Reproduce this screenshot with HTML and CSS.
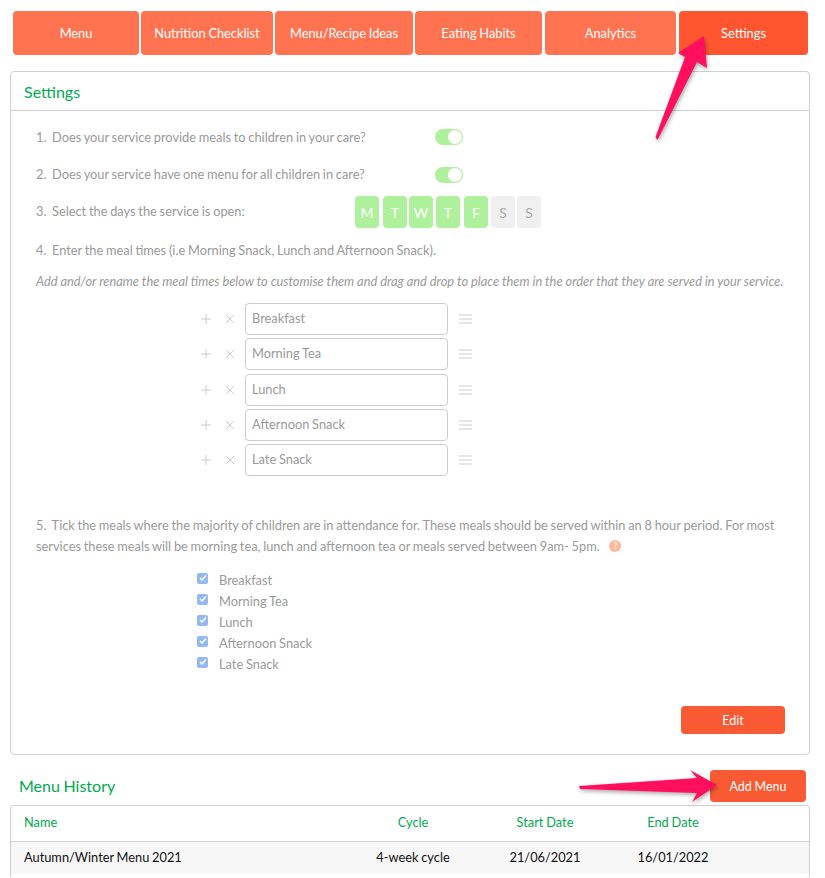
FILE: index.html
```html
<!DOCTYPE html>
<html lang="en">
<head>
  <meta charset="UTF-8" />
  <title>Settings</title>
  <link rel="stylesheet" href="styles.css">
</head>
<body>
  <nav class="tabs">
    <a class="tab tab-menu">Menu</a>
    <a class="tab tab-nutrition">Nutrition Checklist</a>
    <a class="tab tab-ideas">Menu/Recipe Ideas</a>
    <a class="tab tab-habits">Eating Habits</a>
    <a class="tab tab-analytics">Analytics</a>
    <a class="tab tab-settings active">Settings</a>
  </nav>

  <section class="panel">
    <h2 class="panel-title">Settings</h2>
    <div class="panel-body">
      <div class="question">
        <span class="question-text">1.&nbsp; Does your service provide meals to children in your care?</span>
        <span class="toggle"><span class="knob"></span></span>
      </div>
      <div class="question">
        <span class="question-text">2.&nbsp; Does your service have one menu for all children in care?</span>
        <span class="toggle toggle-second"><span class="knob"></span></span>
      </div>
      <div class="question">
        <span class="question-text">3.&nbsp; Select the days the service is open:</span>
        <div class="days">
          <span class="day on">M</span>
          <span class="day on">T</span>
          <span class="day on">W</span>
          <span class="day on">T</span>
          <span class="day on">F</span>
          <span class="day">S</span>
          <span class="day">S</span>
        </div>
      </div>

      <p class="line line-four">4.&nbsp; Enter the meal times (i.e Morning Snack, Lunch and Afternoon Snack).</p>
      <p class="line line-hint">Add and/or rename the meal times below to customise them and drag and drop to place them in the order that they are served in your service.</p>

      <div class="meals">
        <div class="meal">
          <svg class="icon" width="12" height="12" viewBox="0 0 12 12"><path d="M6 1v10M1 6h10"/></svg>
          <svg class="icon" width="12" height="12" viewBox="0 0 12 12"><path d="M2 2l8 8M10 2l-8 8"/></svg>
          <input class="meal-input" value="Breakfast" readonly>
          <svg class="icon" width="13" height="12" viewBox="0 0 13 12"><path d="M0 2h13M0 6h13M0 10h13"/></svg>
        </div>
        <div class="meal">
          <svg class="icon" width="12" height="12" viewBox="0 0 12 12"><path d="M6 1v10M1 6h10"/></svg>
          <svg class="icon" width="12" height="12" viewBox="0 0 12 12"><path d="M2 2l8 8M10 2l-8 8"/></svg>
          <input class="meal-input" value="Morning Tea" readonly>
          <svg class="icon" width="13" height="12" viewBox="0 0 13 12"><path d="M0 2h13M0 6h13M0 10h13"/></svg>
        </div>
        <div class="meal">
          <svg class="icon" width="12" height="12" viewBox="0 0 12 12"><path d="M6 1v10M1 6h10"/></svg>
          <svg class="icon" width="12" height="12" viewBox="0 0 12 12"><path d="M2 2l8 8M10 2l-8 8"/></svg>
          <input class="meal-input" value="Lunch" readonly>
          <svg class="icon" width="13" height="12" viewBox="0 0 13 12"><path d="M0 2h13M0 6h13M0 10h13"/></svg>
        </div>
        <div class="meal">
          <svg class="icon" width="12" height="12" viewBox="0 0 12 12"><path d="M6 1v10M1 6h10"/></svg>
          <svg class="icon" width="12" height="12" viewBox="0 0 12 12"><path d="M2 2l8 8M10 2l-8 8"/></svg>
          <input class="meal-input" value="Afternoon Snack" readonly>
          <svg class="icon" width="13" height="12" viewBox="0 0 13 12"><path d="M0 2h13M0 6h13M0 10h13"/></svg>
        </div>
        <div class="meal">
          <svg class="icon" width="12" height="12" viewBox="0 0 12 12"><path d="M6 1v10M1 6h10"/></svg>
          <svg class="icon" width="12" height="12" viewBox="0 0 12 12"><path d="M2 2l8 8M10 2l-8 8"/></svg>
          <input class="meal-input" value="Late Snack" readonly>
          <svg class="icon" width="13" height="12" viewBox="0 0 13 12"><path d="M0 2h13M0 6h13M0 10h13"/></svg>
        </div>
      </div>

      <p class="line-five">5.&nbsp; Tick the meals where the majority of children are in attendance for. These meals should be served within an 8 hour period. For most services these meals will be morning tea, lunch and afternoon tea or meals served between 9am- 5pm. <span class="help">?</span></p>

      <ul class="ticks">
        <li class="tick"><span class="box"><svg width="8" height="8" viewBox="0 0 8 8"><path d="M1 4l2 2 4-4.5"/></svg></span>Breakfast</li>
        <li class="tick"><span class="box"><svg width="8" height="8" viewBox="0 0 8 8"><path d="M1 4l2 2 4-4.5"/></svg></span>Morning Tea</li>
        <li class="tick"><span class="box"><svg width="8" height="8" viewBox="0 0 8 8"><path d="M1 4l2 2 4-4.5"/></svg></span>Lunch</li>
        <li class="tick"><span class="box"><svg width="8" height="8" viewBox="0 0 8 8"><path d="M1 4l2 2 4-4.5"/></svg></span>Afternoon Snack</li>
        <li class="tick"><span class="box"><svg width="8" height="8" viewBox="0 0 8 8"><path d="M1 4l2 2 4-4.5"/></svg></span>Late Snack</li>
      </ul>

      <div class="actions">
        <button class="btn btn-edit">Edit</button>
      </div>
    </div>
  </section>

  <div class="history-head">
    <h2 class="history-title">Menu History</h2>
    <button class="btn btn-add">Add Menu</button>
  </div>

  <section class="panel history">
    <table class="history-table">
      <colgroup>
        <col class="col-name">
        <col class="col-cycle">
        <col class="col-start">
        <col class="col-end">
        <col>
      </colgroup>
      <thead>
        <tr>
          <th class="cell-name">Name</th>
          <th>Cycle</th>
          <th>Start Date</th>
          <th>End Date</th>
          <th></th>
        </tr>
      </thead>
      <tbody>
        <tr>
          <td class="cell-name">Autumn/Winter Menu 2021</td>
          <td>4-week cycle</td>
          <td>21/06/2021</td>
          <td>16/01/2022</td>
          <td></td>
        </tr>
      </tbody>
    </table>
  </section>

  <!-- annotation arrows drawn over the screenshot -->
  <svg class="arrows" width="825" height="878" viewBox="0 0 825 878">
    <polygon points="704,36 678,53 685,57 655.5,137 657.5,140 697,62 707,68"/>
    <polygon points="717,785 690,770 697,778 579,786 580,789 697,793 692,802"/>
  </svg>
</body>
</html>
```

FILE: styles.css
```css
* { box-sizing: border-box; }

html, body {
  height: 100%;
  overflow: hidden;
}

body {
  position: relative;
  margin: 0;
  background: #fff;
  font-family: Lato, sans-serif;
  font-size: 12.8px;
  word-spacing: -0.5px;
  color: #999;
}

.tabs {
  display: flex;
  padding: 11px 17px 0 13px;
  height: 55px;
}

.tab {
  display: flex;
  align-items: center;
  justify-content: center;
  height: 44px;
  border-radius: 4px;
  background: #ff7350;
  color: #fff;
}

.tab-menu { width: 126px; margin-right: 2px; }
.tab-nutrition { width: 132px; margin-right: 2px; }
.tab-ideas { width: 138px; margin-right: 2px; }
.tab-habits { width: 127px; margin-right: 3px; }
.tab-analytics { width: 131px; margin-right: 3px; }
.tab-settings { width: 129px; }

.tab.active { background: #ff5630; }

.panel {
  margin: 16px 15px 0 10px;
  border: 1px solid #d0d0d0;
  border-radius: 4px;
  background: #fff;
}

.panel-title {
  margin: 0;
  height: 39px;
  padding-left: 13px;
  border-bottom: 1px solid #d0d0d0;
  font-size: 16px;
  font-weight: 400;
  line-height: 40px;
  color: #00a94f;
}

.panel-body {
  height: 643px;
  padding: 7px 25px 0;
}

.question {
  display: flex;
  align-items: center;
  height: 37px;
}

.question-text {
  width: 319px;
  white-space: nowrap;
}

.toggle {
  display: flex;
  justify-content: flex-end;
  width: 28px;
  height: 16px;
  margin-left: 80px;
  border-radius: 8px;
  background: #aef09b;
}

.toggle-second { margin-top: 2px; }

.knob {
  width: 16px;
  height: 16px;
  border: 1px solid #aef09b;
  border-radius: 50%;
  background: #fff;
}

.days {
  display: flex;
  gap: 3px;
  margin-top: 3px;
}

.day {
  display: flex;
  align-items: center;
  justify-content: center;
  width: 24px;
  height: 32px;
  border-radius: 4px;
  background: #f0f0f0;
  font-size: 14px;
  color: #aaa;
}

.day:nth-child(2), .day:nth-child(5) { margin-left: 1px; }
.day:nth-child(3), .day:nth-child(7) { margin-left: -1px; }

.day.on {
  background: #aef09b;
  color: #fff;
}

.line {
  margin: 0;
  line-height: 20px;
}

.line-four { margin-top: 11px; }

.line-hint {
  margin-top: 11px;
  font-style: italic;
  word-spacing: 0;
  white-space: nowrap;
}

.meals {
  display: flex;
  flex-direction: column;
  gap: 3.25px;
  margin: 12px 0 0 164px;
}

.meal {
  display: flex;
  align-items: center;
  height: 32px;
}

.icon {
  flex: none;
  fill: none;
  stroke: #ccc;
  stroke-width: 1;
}

.icon + .icon { margin-left: 12px; }

.meal-input {
  width: 203px;
  height: 32px;
  margin: 0 11px 0 9px;
  padding: 0 6px 2px;
  border: 1px solid #ccc;
  border-radius: 4px;
  outline: none;
  font: 12.8px Lato, sans-serif;
  word-spacing: -0.5px;
  color: #999;
}

.line-five {
  margin: 39px 0 0;
  line-height: 21px;
}

.help {
  display: inline-block;
  width: 12px;
  height: 12px;
  margin-left: 7px;
  border-radius: 50%;
  background: #ffb899;
  font-size: 9px;
  font-weight: 700;
  line-height: 12px;
  text-align: center;
  vertical-align: 2px;
  color: #fff;
}

.ticks {
  margin: 12px 0 0;
  padding: 0 0 0 161px;
  list-style: none;
}

.tick {
  display: flex;
  align-items: center;
  height: 21px;
}

.box {
  display: flex;
  align-items: center;
  justify-content: center;
  width: 11px;
  height: 11px;
  margin: -3px 11px 0 0;
  border-radius: 2px;
  background: #94b8f0;
}

.box path {
  fill: none;
  stroke: #fff;
  stroke-width: 1.5;
}

.actions {
  display: flex;
  justify-content: flex-end;
  margin-top: 32px;
}

.btn {
  border: none;
  border-radius: 4px;
  background: #fa5a33;
  font: 12.5px Lato, sans-serif;
  word-spacing: -0.5px;
  color: #fff;
}

.btn-edit {
  width: 104px;
  height: 28px;
  margin-right: -1px;
}

.history-head {
  display: flex;
  align-items: center;
  justify-content: space-between;
  height: 32px;
  margin: 15px 19px 0 19px;
}

.history-title {
  margin: 0;
  padding-bottom: 2px;
  font-size: 16px;
  font-weight: 400;
  color: #00a94f;
}

.btn-add {
  width: 96px;
  height: 32px;
}

.history {
  height: 73px;
  margin-top: 3px;
  border-bottom: none;
}

.history-table {
  width: 100%;
  border-collapse: collapse;
  table-layout: fixed;
}

.col-name { width: 336px; }
.col-cycle { width: 132px; }
.col-start { width: 132px; }
.col-end { width: 124px; }

.history-table th,
.history-table td {
  padding: 0;
  text-align: center;
  font-weight: 400;
}

.history-table th {
  height: 35px;
  padding-bottom: 2px;
  border-bottom: 1px solid #d0d0d0;
  color: #00a94f;
}

.history-table td {
  height: 33px;
  padding-bottom: 1px;
  background: #f7f7f7;
  color: #111;
}

.history-table .cell-name {
  padding-left: 13px;
  text-align: left;
}

.arrows {
  position: absolute;
  top: 0;
  left: 0;
  pointer-events: none;
  filter: drop-shadow(1px 2px 2px rgba(0, 0, 0, 0.35));
}

.arrows polygon { fill: #ff0f5e; }
```
